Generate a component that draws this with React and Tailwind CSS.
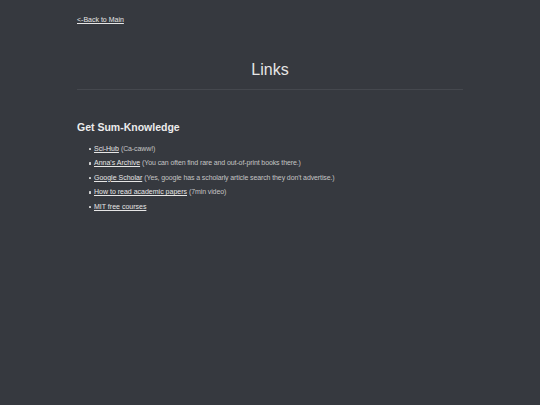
export default function App() {
  const items = [
    ["Sci-Hub", "(Ca-caww!)"],
    ["Anna's Archive", "(You can often find rare and out-of-print books there.)"],
    ["Google Scholar", "(Yes, google has a scholarly article search they don't advertise.)"],
    ["How to read academic papers", "(7min video)"],
    ["MIT free courses", ""],
  ];
  return (
    <div className="min-h-[405px] w-full bg-[#36393f] text-[#d4d4d4]" style={{ fontFamily: '"Liberation Sans", Arial, sans-serif' }}>
      <div className="mx-auto w-[386px] pt-[15px]">
        <a href="#" className="block text-[7px] leading-[10.5px] text-[#e6e6e6] underline">&lt;-Back to Main</a>
        <h1 className="mt-[34px] text-center text-[16px] leading-[20px] text-[#e6e6e6]">Links</h1>
        <div className="mt-[9px] h-px bg-[#45484e]" />
        <h2 className="mt-[31px] text-[10.5px] font-bold leading-[13px] text-[#ececec]">Get Sum-Knowledge</h2>
        <ul className="mt-[8.5px] list-none pl-[11.5px]">
          {items.map(([l, d]) => (
            <li key={l} className="flex items-center text-[7px] leading-[14.4px]">
              <span className="mr-[3px] inline-block h-[2.5px] w-[2.5px] rounded-[0.5px] bg-[#cfcfcf]" />
              <a href="#" className="text-[#e6e6e6] underline">{l}</a>
              {d && <span className="ml-[2px] tracking-[-0.11px] text-[#c4c4c4]">{d}</span>}
            </li>
          ))}
        </ul>
      </div>
    </div>
  );
}
